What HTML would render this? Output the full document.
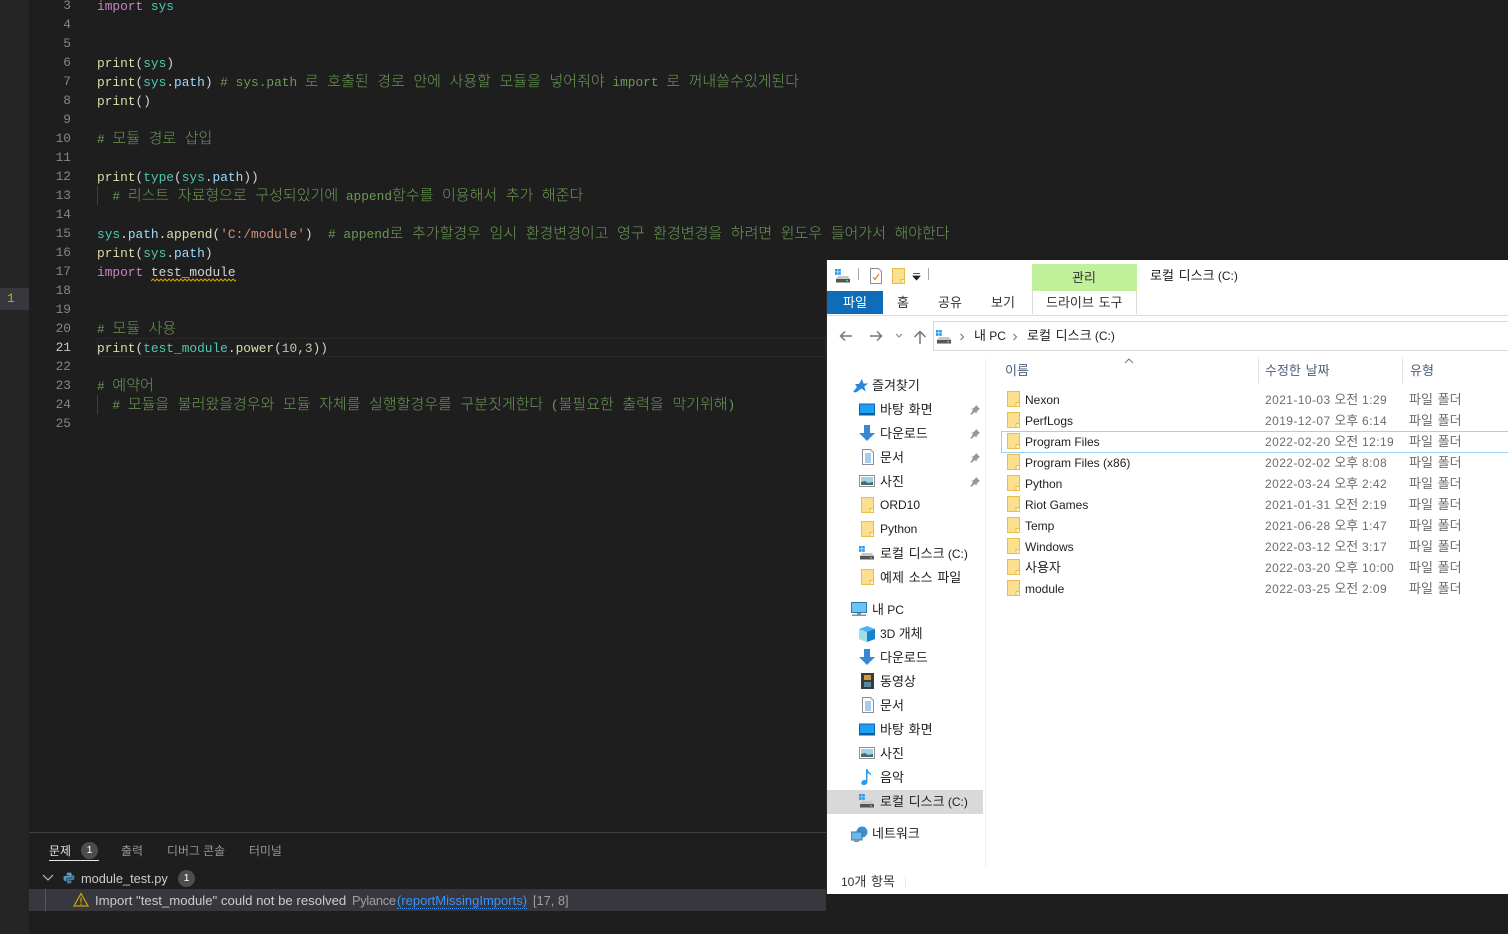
<!DOCTYPE html>
<html lang="ko"><head><meta charset="utf-8"><title>module_test.py</title>
<style>
html,body{margin:0;padding:0;width:1508px;height:934px;overflow:hidden;background:#1e1e1e}
*{box-sizing:border-box}
.abs{position:absolute}
#strip{left:0;top:0;width:29px;height:934px;background:#252526}
#mark{left:0;top:288px;width:29px;height:22px;background:#37373d;color:#cca700;font:12.8px/22px "Liberation Mono",monospace;padding-left:7px}
#nums{left:29px;top:-4px;width:42px;text-align:right;font:12.83px/19px "Liberation Mono",monospace;color:#858585}
#nums div{height:19px}
#code{left:97px;top:-5px;font:12.83px/19px "Liberation Mono","Noto Sans CJK KR",monospace;color:#d4d4d4}
#code div{height:19px;white-space:pre}
#code div::before{content:"\200b";font:300 15px/19px "Noto Sans CJK KR",sans-serif}
.k{font:normal 15px/19px "Noto Sans CJK KR",sans-serif;word-spacing:4.36px;font-weight:300}
.c{color:#6a9955}.i{color:#c586c0}.f{color:#dcdcaa}.t{color:#4ec9b0}.v{color:#9cdcfe}.s{color:#ce9178}.n{color:#b5cea8}
.guide{width:1px;background:#404040}
#cur{left:97px;top:338px;width:729px;height:19px;border:1px solid #282828}
#panel{left:29px;top:832px;width:797px;height:1px;background:#414141}
.ptab{font:normal 11.9px/16px "Noto Sans CJK KR",sans-serif;color:#969696;white-space:pre}
.badge{width:17px;height:17px;border-radius:50%;background:#4d4d4d;color:#fff;font:10.5px/17px "Liberation Sans",sans-serif;text-align:center}
.pt{font:12.8px/18px "Liberation Sans",sans-serif;white-space:pre;color:#cccccc}
#ex{left:826px;top:260px;width:682px;height:634px;background:#fff;border-left:1px solid #2a2a2a}
.x{position:absolute;font:12px/18px "Liberation Sans","Noto Sans CJK KR",sans-serif;color:#1e1e1e;white-space:pre}
.x b{font:normal 13px/18px "Noto Sans CJK KR",sans-serif;word-spacing:1.1px}
.nm{margin-top:1px}
.d{color:#6d6d6d;letter-spacing:.42px}
.d b{letter-spacing:0}
.h{color:#4c607a}
.ic{position:absolute}
</style></head>
<body>
<svg width="0" height="0" style="position:absolute">
<defs>
<symbol id="folder" viewBox="0 0 13 16"><path d="M.5.5h12v11.5l-4 3.5H.5z" fill="#fbe08f" stroke="#e9bd4c"/><path d="M9 15.5V11.5h3.5v4z" fill="#fff2c2" stroke="#e9bd4c"/></symbol>
<symbol id="drive" viewBox="0 0 16 14"><rect x="0" y="0" width="2.6" height="2.6" fill="#1e9af0"/><rect x="3.2" y="0" width="2.6" height="2.6" fill="#1e9af0"/><rect x="0" y="3.2" width="2.6" height="2.6" fill="#1e9af0"/><rect x="3.2" y="3.2" width="2.6" height="2.6" fill="#1e9af0"/><path d="M3 7h10l2 3H1z" fill="#c8c8c8"/><rect x="1" y="10" width="14" height="3.5" fill="#555"/><rect x="11" y="11" width="2" height="1.3" fill="#4fd07a"/></symbol>
<symbol id="desk" viewBox="0 0 16 12"><rect x=".5" y=".5" width="15" height="11" fill="#1ea0f2" stroke="#0b63a8"/><rect x="1" y="9.5" width="14" height="2" fill="#0b5c9c"/></symbol>
<symbol id="down" viewBox="0 0 16 16"><path d="M5 0h6v8h5l-8 8-8-8h5z" fill="#3b87d0"/></symbol>
<symbol id="doc" viewBox="0 0 12 16"><path d="M.5.5h8l3 3v12H.5z" fill="#fff" stroke="#8c8c9a"/><path d="M3 5h6M3 7h6M3 9h6M3 11h6M3 13h6" stroke="#4a98d8" stroke-width="1"/></symbol>
<symbol id="pic" viewBox="0 0 16 12"><rect x=".5" y=".5" width="15" height="11" fill="#fff" stroke="#8a8f9a"/><rect x="2" y="2" width="12" height="8" fill="#9fd0ee"/><path d="M2 10V7l4-1 3 2 5-1v3z" fill="#4d6a5c"/></symbol>
<symbol id="pin" viewBox="0 0 10 10"><path d="M6 0l4 4-1.2.6-2 2-.3 2L4.800 7 1.500 9.800.2 9.500 3 5.200 1.400 3.700l2-.3 2-2z" fill="#8f98a6"/></symbol>
<symbol id="pc" viewBox="0 0 16 14"><rect x=".5" y=".5" width="15" height="10" fill="#6cc3f4" stroke="#2d78b0"/><rect x="6" y="11" width="4" height="1.500" fill="#8a9299"/><rect x="1" y="12.500" width="14" height="1.500" fill="#8a9299"/></symbol>
</defs></svg>

<div class="abs" id="strip"></div>
<div class="abs" id="mark">1</div>
<div class="abs" id="cur"></div>
<div class="abs guide" style="left:97px;top:186px;height:19px"></div>
<div class="abs guide" style="left:97px;top:395px;height:19px"></div>

<div class="abs" id="nums"><div>3</div><div>4</div><div>5</div><div>6</div><div>7</div><div>8</div><div>9</div><div>10</div><div>11</div><div>12</div><div>13</div><div>14</div><div>15</div><div>16</div><div>17</div><div>18</div><div>19</div><div>20</div><div style="color:#c6c6c6">21</div><div>22</div><div>23</div><div>24</div><div>25</div></div>

<div class="abs" id="code"><div><span class="i">import</span> <span class="t">sys</span></div><div></div><div></div><div><span class="f">print</span>(<span class="t">sys</span>)</div><div><span class="f">print</span>(<span class="t">sys</span>.<span class="v">path</span>) <span class="c"># sys.path <span class="k">로 호출된 경로 안에 사용할 모듈을 넣어줘야</span> import <span class="k">로 꺼내쓸수있게된다</span></span></div><div><span class="f">print</span>()</div><div></div><div><span class="c"># <span class="k">모듈 경로 삽입</span></span></div><div></div><div><span class="f">print</span>(<span class="t">type</span>(<span class="t">sys</span>.<span class="v">path</span>))</div><div>  <span class="c"># <span class="k">리스트 자료형으로 구성되있기에</span> append<span class="k">함수를 이용해서 추가 해준다</span></span></div><div></div><div><span class="t">sys</span>.<span class="v">path</span>.<span class="f">append</span>(<span class="s">'C:/module'</span>)  <span class="c"># append<span class="k">로 추가할경우 임시 환경변경이고 영구 환경변경을 하려면 윈도우 들어가서 해야한다</span></span></div><div><span class="f">print</span>(<span class="t">sys</span>.<span class="v">path</span>)</div><div><span class="i">import</span> test_module</div><div></div><div></div><div><span class="c"># <span class="k">모듈 사용</span></span></div><div><span class="f">print</span>(<span class="t">test_module</span>.<span class="f">power</span>(<span class="n">10</span>,<span class="n">3</span>))</div><div></div><div><span class="c"># <span class="k">예약어</span></span></div><div>  <span class="c"># <span class="k">모듈을 불러왔을경우와 모듈 자체를 실행할경우를 구분짓게한다</span> (<span class="k">불필요한 출력을 막기위해</span>)</span></div><div></div></div>

<svg class="abs" style="left:151px;top:278px" width="85" height="4"><path d="M0 3l2-2 2 2 2-2 2 2 2-2 2 2 2-2 2 2 2-2 2 2 2-2 2 2 2-2 2 2 2-2 2 2 2-2 2 2 2-2 2 2 2-2 2 2 2-2 2 2 2-2 2 2 2-2 2 2 2-2 2 2 2-2 2 2 2-2 2 2 2-2 2 2 2-2 2 2 2-2 2 2 2-2 2 2 2-2 2 2" fill="none" stroke="#cca700" stroke-width="1"/></svg>

<!-- problems panel -->
<div class="abs" id="panel"></div>
<div class="abs ptab" style="left:49px;top:843px;color:#e7e7e7">문제</div>
<div class="abs" style="left:49px;top:860px;width:50px;height:1px;background:#e7e7e7"></div>
<div class="abs badge" style="left:81px;top:842px">1</div>
<div class="abs ptab" style="left:121px;top:843px">출력</div>
<div class="abs ptab" style="left:167px;top:843px">디버그 콘솔</div>
<div class="abs ptab" style="left:249px;top:843px">터미널</div>
<svg class="abs" style="left:42px;top:873px" width="12" height="10"><path d="M1 2l5 5 5-5" fill="none" stroke="#c5c5c5" stroke-width="1.100"/></svg>
<svg class="abs" style="left:63px;top:872px" width="12" height="12" viewBox="0 0 12 12"><path d="M6 .5C3.500.5 3.500 1.500 3.500 3.500H6.500V4H2C.5 4 .5 5.500.5 6.500S1 9 2 9H3.200V7.500C3.200 6.500 4 5.800 5 5.800H7.500C8.300 5.800 8.800 5.300 8.800 4.500V2C8.800 1 7.800.5 6 .5z" fill="#519aba"/><path d="M6 11.500C8.500 11.500 8.500 10.500 8.500 8.500H5.500V8H10C11.500 8 11.500 6.500 11.500 5.500S11 3 10 3H9.200V4.800C9.200 5.800 8.400 6.400 7.500 6.400H5C4.200 6.400 3.700 7 3.700 7.700V10C3.700 11 4.700 11.500 6 11.500z" fill="#3f7f9c"/></svg>
<div class="abs pt" style="left:81px;top:870px">module_test.py</div>
<div class="abs badge" style="left:178px;top:870px">1</div>
<div class="abs" style="left:29px;top:889px;width:797px;height:22px;background:#37373d"></div>
<div class="abs" style="left:45px;top:889px;width:1px;height:22px;background:#585858"></div>
<svg class="abs" style="left:73px;top:892px" width="16" height="15" viewBox="0 0 16 15"><path d="M8 1.500L15 14H1z" fill="none" stroke="#cca700" stroke-width="1.200"/><path d="M8 5.500V10.500M8 11.500V13" stroke="#cca700" stroke-width="1.200"/></svg>
<div class="abs pt" style="left:95px;top:892px;font-size:13.2px">Import "test_module" could not be resolved</div>
<div class="abs pt" style="left:352px;top:892px;color:#a0a0a0;letter-spacing:-.25px">Pylance</div>
<div class="abs pt" style="left:397px;top:892px;color:#3794ff;border-bottom:1px dotted #3794ff;height:17px;line-height:18px;font-size:13px">(reportMissingImports)</div>
<div class="abs pt" style="left:533px;top:892px;color:#a0a0a0">[17, 8]</div>

<!-- explorer -->
<div class="abs" id="ex"></div>
<div class="abs" style="left:827px;top:260px;width:681px;height:634px;font-size:0">

<svg class="ic" style="left:8px;top:9px" width="16" height="14"><use href="#drive"/></svg>
<div class="abs" style="left:31px;top:8px;width:1px;height:12px;background:#a0a8b4"></div>
<svg class="ic" style="left:43px;top:8px" width="12" height="16" viewBox="0 0 12 16"><path d="M.5.500h8l3 3v12H.5z" fill="#fff" stroke="#8c8c9a"/><path d="M3 9l2 2.500L9 6" fill="none" stroke="#e58a2e" stroke-width="1.300"/></svg>
<svg class="ic" style="left:65px;top:8px" width="13" height="16"><use href="#folder"/></svg>
<svg class="ic" style="left:85px;top:13px" width="9" height="8"><path d="M1 .5h7M1 3h7L4.500 7z" fill="#222" stroke="#222" stroke-width=".8"/></svg>
<div class="abs" style="left:101px;top:8px;width:1px;height:12px;background:#a0a8b4"></div>

<div class="abs" style="left:205px;top:4px;width:105px;height:27px;background:#c0f09a"></div>
<div class="x" style="left:245px;top:8px;color:#333"><b>관리</b></div>
<div class="x" style="left:323px;top:6px"><b>로컬 디스크</b> (C:)</div>

<div class="abs" style="left:0;top:31px;width:56px;height:23px;background:#0f6cb8"></div>
<div class="x" style="left:16px;top:33px;color:#fff"><b>파일</b></div>
<div class="x" style="left:70px;top:33px;color:#333"><b>홈</b></div>
<div class="x" style="left:111px;top:33px;color:#333"><b>공유</b></div>
<div class="x" style="left:164px;top:33px;color:#333"><b>보기</b></div>
<div class="abs" style="left:205px;top:31px;width:1px;height:23px;background:#dadada"></div>
<div class="abs" style="left:309px;top:31px;width:1px;height:23px;background:#dadada"></div>
<div class="x" style="left:219px;top:33px;color:#333"><b>드라이브 도구</b></div>
<div class="abs" style="left:0;top:55px;width:681px;height:1px;background:#dadada"></div>

<svg class="ic" style="left:12px;top:70px" width="14" height="12"><path d="M13 6H1.500M6 1.500L1.500 6 6 10.500" fill="none" stroke="#6f7684" stroke-width="1.500"/></svg>
<svg class="ic" style="left:42px;top:70px" width="14" height="12"><path d="M1 6h11.500M8 1.500L12.500 6 8 10.500" fill="none" stroke="#6f7684" stroke-width="1.500"/></svg>
<svg class="ic" style="left:68px;top:73px" width="8" height="6"><path d="M1 1l3 3 3-3" fill="none" stroke="#8a8f99" stroke-width="1.200"/></svg>
<svg class="ic" style="left:86px;top:70px" width="14" height="14"><path d="M7 14V1.500M1.500 7L7 1.500 12.500 7" fill="none" stroke="#6f7684" stroke-width="1.500"/></svg>

<div class="abs" style="left:106px;top:61px;width:575px;height:30px;border:1px solid #d9d9d9;border-right:0"></div>
<svg class="ic" style="left:109px;top:70px" width="16" height="14"><use href="#drive"/></svg>
<svg class="ic" style="left:132px;top:73px" width="6" height="8"><path d="M1.500 1l3 3-3 3" fill="none" stroke="#777" stroke-width="1.100"/></svg>
<div class="x" style="left:147px;top:66px"><b>내</b> PC</div>
<svg class="ic" style="left:185px;top:73px" width="6" height="8"><path d="M1.500 1l3 3-3 3" fill="none" stroke="#777" stroke-width="1.100"/></svg>
<div class="x" style="left:200px;top:66px"><b>로컬 디스크</b> (C:)</div>

<!-- header -->
<svg class="ic" style="left:297px;top:98px" width="10" height="6"><path d="M1 5l4-4 4 4" fill="none" stroke="#777"/></svg>
<div class="x h" style="left:178px;top:101px"><b>이름</b></div>
<div class="x h" style="left:438px;top:101px"><b>수정한 날짜</b></div>
<div class="x h" style="left:583px;top:101px"><b>유형</b></div>
<div class="abs" style="left:431px;top:98px;height:25px;border-left:1px dotted #c8c8c8"></div>
<div class="abs" style="left:575px;top:98px;height:25px;border-left:1px dotted #c8c8c8"></div>
<div class="abs" style="left:158px;top:98px;width:1px;height:510px;background:#f2f2f2"></div>

<!-- selected row -->
<div class="abs" style="left:174px;top:171px;width:507px;height:22px;border:1px solid #99d1ff;border-right:0"></div>

<!-- rows -->
<svg class="ic" style="left:180px;top:131px" width="13" height="16"><use href="#folder"/></svg><div class="x nm" style="left:198px;top:130px">Nexon</div><div class="x d" style="left:438px;top:130px">2021-10-03 <b>오전</b> 1:29</div><div class="x d" style="left:582px;top:130px"><b>파일 폴더</b></div>
<svg class="ic" style="left:180px;top:152px" width="13" height="16"><use href="#folder"/></svg><div class="x nm" style="left:198px;top:151px">PerfLogs</div><div class="x d" style="left:438px;top:151px">2019-12-07 <b>오후</b> 6:14</div><div class="x d" style="left:582px;top:151px"><b>파일 폴더</b></div>
<svg class="ic" style="left:180px;top:173px" width="13" height="16"><use href="#folder"/></svg><div class="x nm" style="left:198px;top:172px">Program Files</div><div class="x d" style="left:438px;top:172px">2022-02-20 <b>오전</b> 12:19</div><div class="x d" style="left:582px;top:172px"><b>파일 폴더</b></div>
<svg class="ic" style="left:180px;top:194px" width="13" height="16"><use href="#folder"/></svg><div class="x nm" style="left:198px;top:193px">Program Files (x86)</div><div class="x d" style="left:438px;top:193px">2022-02-02 <b>오후</b> 8:08</div><div class="x d" style="left:582px;top:193px"><b>파일 폴더</b></div>
<svg class="ic" style="left:180px;top:215px" width="13" height="16"><use href="#folder"/></svg><div class="x nm" style="left:198px;top:214px">Python</div><div class="x d" style="left:438px;top:214px">2022-03-24 <b>오후</b> 2:42</div><div class="x d" style="left:582px;top:214px"><b>파일 폴더</b></div>
<svg class="ic" style="left:180px;top:236px" width="13" height="16"><use href="#folder"/></svg><div class="x nm" style="left:198px;top:235px">Riot Games</div><div class="x d" style="left:438px;top:235px">2021-01-31 <b>오전</b> 2:19</div><div class="x d" style="left:582px;top:235px"><b>파일 폴더</b></div>
<svg class="ic" style="left:180px;top:257px" width="13" height="16"><use href="#folder"/></svg><div class="x nm" style="left:198px;top:256px">Temp</div><div class="x d" style="left:438px;top:256px">2021-06-28 <b>오후</b> 1:47</div><div class="x d" style="left:582px;top:256px"><b>파일 폴더</b></div>
<svg class="ic" style="left:180px;top:278px" width="13" height="16"><use href="#folder"/></svg><div class="x nm" style="left:198px;top:277px">Windows</div><div class="x d" style="left:438px;top:277px">2022-03-12 <b>오전</b> 3:17</div><div class="x d" style="left:582px;top:277px"><b>파일 폴더</b></div>
<svg class="ic" style="left:180px;top:299px" width="13" height="16"><use href="#folder"/></svg><div class="x" style="left:198px;top:298px"><b>사용자</b></div><div class="x d" style="left:438px;top:298px">2022-03-20 <b>오후</b> 10:00</div><div class="x d" style="left:582px;top:298px"><b>파일 폴더</b></div>
<svg class="ic" style="left:180px;top:320px" width="13" height="16"><use href="#folder"/></svg><div class="x nm" style="left:198px;top:319px">module</div><div class="x d" style="left:438px;top:319px">2022-03-25 <b>오전</b> 2:09</div><div class="x d" style="left:582px;top:319px"><b>파일 폴더</b></div>

<!-- nav -->
<div class="abs" style="left:0;top:530px;width:156px;height:24px;background:#d9d9d9"></div>
<svg class="ic" style="left:26px;top:119px" width="15" height="14" viewBox="0 0 15 14"><path d="M9 0l1.500 4.500H15l-3.700 3 1.400 5L8.500 9.500 3 13.500 0 13l4-5L2 5h4z" fill="#2a86d8"/></svg>
<div class="x" style="left:45px;top:116px"><b>즐겨찾기</b></div>

<svg class="ic" style="left:32px;top:143px" width="16" height="13"><use href="#desk"/></svg><div class="x" style="left:53px;top:140px"><b>바탕 화면</b></div><svg class="ic" style="left:143px;top:145px" width="10" height="10"><use href="#pin"/></svg>
<svg class="ic" style="left:32px;top:165px" width="16" height="16"><use href="#down"/></svg><div class="x" style="left:53px;top:164px"><b>다운로드</b></div><svg class="ic" style="left:143px;top:169px" width="10" height="10"><use href="#pin"/></svg>
<svg class="ic" style="left:35px;top:189px" width="12" height="16"><use href="#doc"/></svg><div class="x" style="left:53px;top:188px"><b>문서</b></div><svg class="ic" style="left:143px;top:193px" width="10" height="10"><use href="#pin"/></svg>
<svg class="ic" style="left:32px;top:215px" width="16" height="12"><use href="#pic"/></svg><div class="x" style="left:53px;top:212px"><b>사진</b></div><svg class="ic" style="left:143px;top:217px" width="10" height="10"><use href="#pin"/></svg>
<svg class="ic" style="left:34px;top:237px" width="13" height="16"><use href="#folder"/></svg><div class="x" style="left:53px;top:236px">ORD10</div>
<svg class="ic" style="left:34px;top:261px" width="13" height="16"><use href="#folder"/></svg><div class="x" style="left:53px;top:260px">Python</div>
<svg class="ic" style="left:32px;top:286px" width="16" height="14"><use href="#drive"/></svg><div class="x" style="left:53px;top:284px"><b>로컬 디스크</b> (C:)</div>
<svg class="ic" style="left:34px;top:309px" width="13" height="16"><use href="#folder"/></svg><div class="x" style="left:53px;top:308px"><b>예제 소스 파일</b></div>

<svg class="ic" style="left:24px;top:342px" width="16" height="14"><use href="#pc"/></svg><div class="x" style="left:45px;top:340px"><b>내</b> PC</div>
<svg class="ic" style="left:32px;top:366px" width="16" height="16" viewBox="0 0 16 16"><path d="M8 0l8 3v10l-8 3-8-3V3z" fill="#4db2ee"/><path d="M8 6v10l8-3V3z" fill="#1a7fd0"/><path d="M0 3l8 3v10l-8-3z" fill="#9fe0e8"/></svg><div class="x" style="left:53px;top:364px">3D <b>개체</b></div>
<svg class="ic" style="left:32px;top:389px" width="16" height="16"><use href="#down"/></svg><div class="x" style="left:53px;top:388px"><b>다운로드</b></div>
<svg class="ic" style="left:34px;top:413px" width="13" height="16" viewBox="0 0 13 16"><rect width="13" height="16" fill="#3a3a3a"/><rect x="3" y="2" width="7" height="5" fill="#d09a3a"/><rect x="3" y="9" width="7" height="5" fill="#5a8a9a"/></svg><div class="x" style="left:53px;top:412px"><b>동영상</b></div>
<svg class="ic" style="left:35px;top:437px" width="12" height="16"><use href="#doc"/></svg><div class="x" style="left:53px;top:436px"><b>문서</b></div>
<svg class="ic" style="left:32px;top:463px" width="16" height="13"><use href="#desk"/></svg><div class="x" style="left:53px;top:460px"><b>바탕 화면</b></div>
<svg class="ic" style="left:32px;top:487px" width="16" height="12"><use href="#pic"/></svg><div class="x" style="left:53px;top:484px"><b>사진</b></div>
<svg class="ic" style="left:33px;top:509px" width="14" height="16" viewBox="0 0 14 16"><path d="M6 0h1.500c.3 3 4 3.500 3.500 7-.8-1.800-2-2.500-3.500-2.800V13c0 2-2 3-4 3S1 14.500 1.500 13 4 10.500 6 11z" fill="#2a9ceb"/></svg><div class="x" style="left:53px;top:508px"><b>음악</b></div>
<svg class="ic" style="left:32px;top:534px" width="16" height="14"><use href="#drive"/></svg><div class="x" style="left:53px;top:532px"><b>로컬 디스크</b> (C:)</div>

<svg class="ic" style="left:24px;top:566px" width="17" height="16" viewBox="0 0 17 16"><circle cx="11" cy="6" r="5.500" fill="#3d8ec9"/><rect x="0" y="6" width="11" height="8" fill="#6cb6ea" stroke="#2d78b0"/><rect x="3" y="14" width="5" height="2" fill="#8a9299"/></svg><div class="x" style="left:45px;top:564px"><b>네트워크</b></div>

<div class="x" style="left:14px;top:612px;color:#333">10<b>개 항목</b></div>
<div class="abs" style="left:78px;top:617px;width:1px;height:10px;background:#e8e8e8"></div>
</div>
</body></html>
